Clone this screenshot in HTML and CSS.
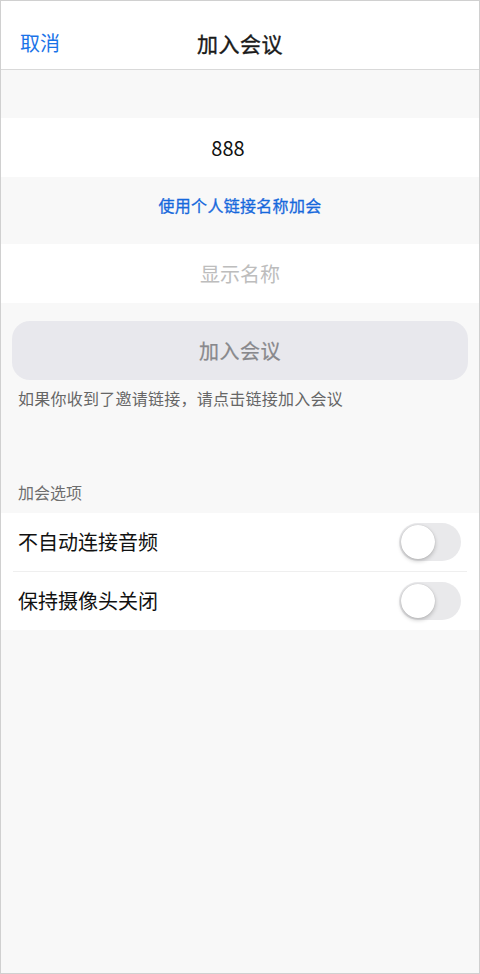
FILE: index.html
```html
<!DOCTYPE html>
<html lang="zh-CN">
<head>
<meta charset="utf-8">
<title>加入会议</title>
<link rel="stylesheet" href="styles.css">
</head>
<body>
<div class="screen">
  <header class="nav">
    <span class="nav-cancel">取消</span>
    <span class="nav-title">加入会议</span>
  </header>

  <div class="field field-id">888</div>
  <div class="link-row"><span class="link">使用个人链接名称加会</span></div>
  <div class="field field-name">显示名称</div>

  <div class="join-btn">加入会议</div>
  <p class="hint">如果你收到了邀请链接，请点击链接加入会议</p>

  <p class="section-label">加会选项</p>
  <div class="options">
    <div class="option">
      <span class="option-text">不自动连接音频</span>
      <span class="toggle"><span class="knob"></span></span>
    </div>
    <div class="option option-sep">
      <span class="option-text">保持摄像头关闭</span>
      <span class="toggle"><span class="knob"></span></span>
    </div>
  </div>
</div>
</body>
</html>
```

FILE: styles.css
```css
* { box-sizing: border-box; }

html, body {
  margin: 0;
  padding: 0;
  background: #ffffff;
}

body {
  font-family: "Noto Sans CJK SC", "Noto Sans", "Liberation Sans", sans-serif;
}

.screen {
  width: 480px;
  height: 974px;
  border: 1px solid #d0d0d0;
  background: #f8f8f8;
  display: flex;
  flex-direction: column;
}

.nav {
  position: relative;
  height: 69px;
  background: #ffffff;
  border-bottom: 1px solid #d9d9d9;
  display: flex;
  align-items: center;
  justify-content: center;
  flex-shrink: 0;
}

.nav-cancel {
  position: absolute;
  left: 19px;
  top: 28px;
  font-size: 20px;
  line-height: 28px;
  color: #1a73e8;
}

.nav-title {
  font-size: 21px;
  line-height: 28px;
  margin-top: 15px;
  color: #1a1a1a;
  font-weight: 400;
  letter-spacing: 0.5px;
  -webkit-text-stroke: 0.35px #1a1a1a;
}

.field {
  height: 59px;
  background: #ffffff;
  display: flex;
  align-items: center;
  justify-content: center;
  font-size: 20px;
  line-height: 28px;
  flex-shrink: 0;
}

.field-id {
  margin-top: 48px;
  padding-right: 24px;
  color: #111111;
}

.field-name {
  color: #bdbdbd;
}

.link-row {
  height: 67px;
  padding-top: 16px;
  text-align: center;
  flex-shrink: 0;
}

.link {
  font-size: 16px;
  line-height: 24px;
  color: #1668dc;
  font-weight: 400;
  letter-spacing: 0.3px;
  -webkit-text-stroke: 0.3px #1668dc;
}

.join-btn {
  margin: 18px 11px 0;
  height: 59px;
  border-radius: 18px;
  background: #e8e8ed;
  color: #88888c;
  font-size: 20px;
  font-weight: 400;
  letter-spacing: 0.5px;
  -webkit-text-stroke: 0.25px #88888c;
  display: flex;
  align-items: center;
  justify-content: center;
  flex-shrink: 0;
}

.hint {
  margin: 7px 0 0;
  padding-left: 17px;
  font-size: 16px;
  line-height: 22px;
  letter-spacing: 0.25px;
  color: #666666;
}

.section-label {
  margin: 72px 0 10px;
  padding-left: 17px;
  font-size: 16px;
  line-height: 22px;
  color: #6e6e6e;
}

.options {
  background: #ffffff;
  flex-shrink: 0;
}

.option {
  height: 58px;
  padding: 0 18px 0 17px;
  display: flex;
  align-items: center;
  justify-content: space-between;
}

.option-sep {
  height: 59px;
  border-top: 1px solid #efefef;
  margin: 0 12px;
  padding: 0 6px 0 5px;
}

.option-text {
  font-size: 20px;
  line-height: 28px;
  color: #111111;
}

.toggle {
  position: relative;
  width: 62px;
  height: 38px;
  border-radius: 19px;
  background: #e9e9eb;
  flex-shrink: 0;
}

.knob {
  position: absolute;
  left: 2px;
  top: 2px;
  width: 34px;
  height: 34px;
  border-radius: 50%;
  background: #ffffff;
  box-shadow: 0 2px 4px rgba(0, 0, 0, 0.22), 0 0 1px rgba(0, 0, 0, 0.2);
}
```
